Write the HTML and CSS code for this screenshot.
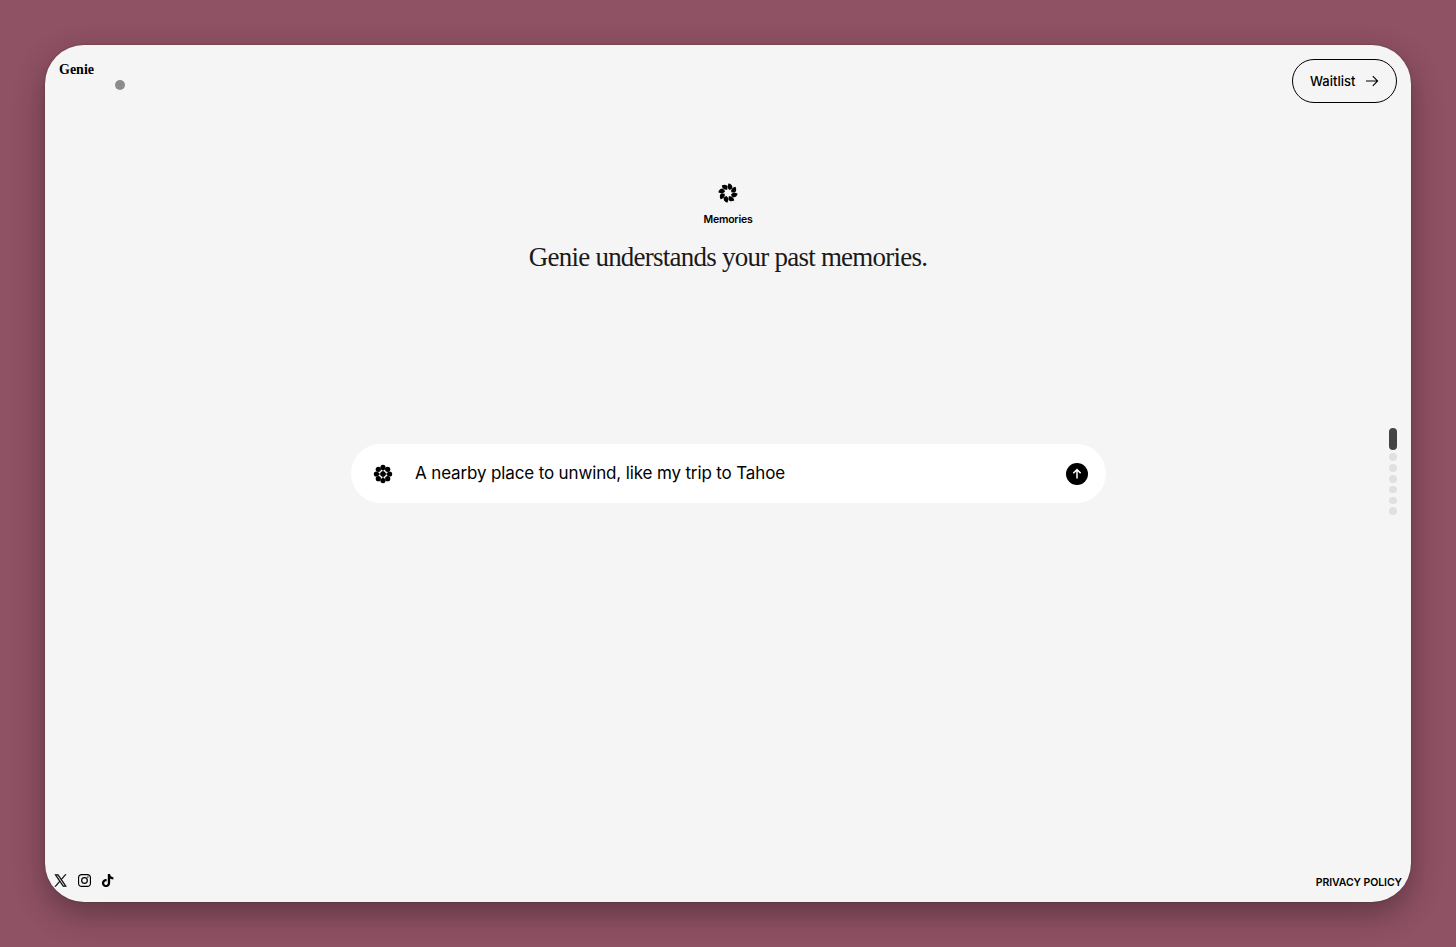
FILE: index.html
```html
<!DOCTYPE html>
<html lang="en">
<head>
    <meta charset="UTF-8">
    <meta name="viewport" content="width=device-width, initial-scale=1.0">
    <title>Genie</title>
    <link rel="stylesheet" href="styles.css">
</head>
<body>
    <div class="window">
        <div class="top">
            <header class="header">
                <a class="logo">Genie</a>
                <a class="waitlist-btn">
                    <span>Waitlist</span>
                    <svg class="waitlist-arrow" viewBox="0 0 14 12" fill="none" stroke="#000" stroke-width="1.1">
                        <path d="M1 6h11.6M7.8 1.2 12.6 6 7.8 10.8"/>
                    </svg>
                </a>
            </header>

            <section class="hero">
                <svg class="hero-icon" viewBox="-10 -10 20 20">
                    <defs>
                        <path id="blade" d="M1.8-2.9C-.7-4.4-.9-7.2.8-9.7 3.8-8.8 5-6.4 4.1-4.6Z"/>
                    </defs>
                    <use href="#blade"/>
                    <use href="#blade" transform="rotate(45)"/>
                    <use href="#blade" transform="rotate(90)"/>
                    <use href="#blade" transform="rotate(135)"/>
                    <use href="#blade" transform="rotate(180)"/>
                    <use href="#blade" transform="rotate(225)"/>
                    <use href="#blade" transform="rotate(270)"/>
                    <use href="#blade" transform="rotate(315)"/>
                </svg>
                <p class="hero-label">Memories</p>
                <h1 class="hero-title">Genie understands your past memories.</h1>
            </section>
        </div>

        <main class="middle">
            <div class="prompt">
                <svg class="prompt-icon" viewBox="-10 -10 20 20">
                    <circle r="2.7"/>
                    <circle cy="-6.6" r="2.6"/>
                    <circle cx="4.7" cy="-4.7" r="2.6"/>
                    <circle cx="6.6" r="2.6"/>
                    <circle cx="4.7" cy="4.7" r="2.6"/>
                    <circle cy="6.6" r="2.6"/>
                    <circle cx="-4.7" cy="4.7" r="2.6"/>
                    <circle cx="-6.6" r="2.6"/>
                    <circle cx="-4.7" cy="-4.7" r="2.6"/>
                    <path d="M0-7V7M-7 0H7" stroke="#000" stroke-width="1"/>
                </svg>
                <span class="prompt-text">A nearby place to unwind, like my trip to Tahoe</span>
                <svg class="prompt-send" viewBox="0 0 22 22" fill="none">
                    <circle cx="11" cy="11" r="11" fill="#000"/>
                    <path d="M11 15.6V7M7.3 10.2 11 6.6l3.7 3.6" stroke="#fff" stroke-width="1.5"/>
                </svg>
            </div>
            <nav class="pager">
                <span class="dot active"></span>
                <span class="dot"></span>
                <span class="dot"></span>
                <span class="dot"></span>
                <span class="dot"></span>
                <span class="dot"></span>
                <span class="dot"></span>
            </nav>
        </main>

        <footer class="footer">
            <div class="social">
                <svg viewBox="0 0 24 24">
                    <path d="M14.3 10.3 22.3 1h-1.9l-6.9 8.1L7.9 1H1.5l8.4 12.2L1.5 23h1.9l7.4-8.5 5.8 8.5H23zm-2.6 3-.8-1.2L4.1 2.4H7l5.5 7.8.8 1.3 7.1 10.2h-2.9z" stroke="#000" stroke-width=".9"/>
                </svg>
                <svg viewBox="0 0 24 24" fill="none" stroke="#000" stroke-width="2.2">
                    <rect x="1" y="1" width="22" height="22" rx="6"/>
                    <circle cx="12" cy="12" r="5.2"/>
                    <circle cx="18.3" cy="5.7" r="1.4" fill="#000" stroke="none"/>
                </svg>
                <svg viewBox="0 0 24 24">
                    <path d="M12.6 0h4.1c.1 1.6.7 3.1 1.8 4.2 1.2 1.1 2.8 1.7 4.3 1.8v4.2c-1.5-.1-2.9-.4-4.3-1-.6-.3-1.1-.6-1.6-1v8.8c-.1 1.4-.6 2.8-1.4 4-1.3 1.9-3.6 3.2-5.9 3.2-1.5.1-2.9-.3-4.2-1-2-1.2-3.5-3.4-3.7-5.8v-1.5c.2-1.9 1.1-3.7 2.6-5 1.7-1.4 4-2.1 6.1-1.7v4.5c-1-.3-2.1-.2-3 .4-.7.4-1.1 1-1.4 1.7-.2.5-.1 1.1-.1 1.6.2 1.6 1.8 3 3.5 2.8 1.1 0 2.2-.6 2.7-1.6.2-.3.4-.7.4-1.1.1-1.8.1-3.6.1-5.4z"/>
                </svg>
            </div>
            <a class="privacy">PRIVACY POLICY</a>
        </footer>
    </div>
    <div class="cursor"></div>
</body>
</html>
```

FILE: styles.css
```css
* {
    box-sizing: border-box;
    margin: 0;
    padding: 0;
}

body {
    height: 100vh;
    padding: 45px;
    background: #8f5164;
    color: #000;
    font-family: 'Inter', sans-serif;
    overflow: hidden;
}

svg {
    display: block;
    flex-shrink: 0;
}

.window {
    height: 857px;
    display: grid;
    grid-template-rows: 1fr auto 1fr;
    background: #f5f5f5;
    border-radius: 39px;
    box-shadow: 0 12px 32px rgba(0, 0, 0, 0.32), 0 0 2px rgba(0, 0, 0, 0.3);
}

.header {
    display: flex;
    justify-content: space-between;
    align-items: flex-start;
    padding: 14px 14px 0;
}

.logo {
    padding-top: 1px;
    font-family: 'Liberation Serif', serif;
    font-size: 14px;
    font-weight: 700;
    line-height: 20px;
}

.waitlist-btn {
    display: flex;
    align-items: center;
    justify-content: space-between;
    width: 105px;
    height: 44px;
    padding: 0 17px;
    border: 1px solid #000;
    border-radius: 22px;
    font-size: 13px;
    font-weight: 500;
}

.waitlist-arrow {
    width: 14px;
    height: 12px;
}

.hero {
    display: flex;
    flex-direction: column;
    align-items: center;
    padding-top: 80px;
}

.hero-icon {
    width: 20px;
    height: 20px;
}

.hero-label {
    margin-top: 10px;
    font-size: 10.5px;
    font-weight: 600;
    line-height: 14px;
    letter-spacing: -0.2px;
}

.hero-title {
    margin-top: 13px;
    font-family: 'Liberation Serif', serif;
    font-size: 27px;
    font-weight: 400;
    line-height: 34px;
    letter-spacing: -0.76px;
    white-space: nowrap;
    color: #1a1a1a;
}

.middle {
    display: grid;
    grid-template-columns: 1fr 755px 1fr;
    align-items: center;
    padding: 0 14px;
}

.prompt {
    grid-column: 2;
    display: flex;
    align-items: center;
    height: 59px;
    padding: 0 18px 0 22px;
    background: #fff;
    border-radius: 30px;
}

.prompt-icon {
    width: 20px;
    height: 20px;
}

.prompt-text {
    flex: 1;
    margin-left: 22.5px;
    padding-bottom: 2px;
    font-size: 17px;
    letter-spacing: -0.14px;
    white-space: nowrap;
}

.prompt-send {
    width: 22px;
    height: 22px;
}

.pager {
    display: flex;
    flex-direction: column;
    gap: 3.3px;
    justify-self: end;
    padding: 0 0.5px 4px 0;
}

.dot {
    width: 7.5px;
    height: 7.5px;
    border-radius: 4px;
    background: #e0e0e0;
}

.dot.active {
    height: 22px;
    background: #444;
}

.footer {
    display: flex;
    align-items: flex-end;
    justify-content: space-between;
    padding: 0 9px 13px;
}

.social {
    display: flex;
    gap: 10.5px;
    padding-bottom: 2px;
}

.social svg {
    width: 13px;
    height: 13px;
}

.privacy {
    margin-bottom: -1px;
    font-size: 10.5px;
    font-weight: 600;
    line-height: 14px;
    letter-spacing: -0.08px;
}

/* custom pointer, floats above the page */
.cursor {
    position: absolute;
    top: 79.5px;
    left: 115px;
    width: 10px;
    height: 10px;
    border-radius: 50%;
    background: #8c8c8c;
}
```
